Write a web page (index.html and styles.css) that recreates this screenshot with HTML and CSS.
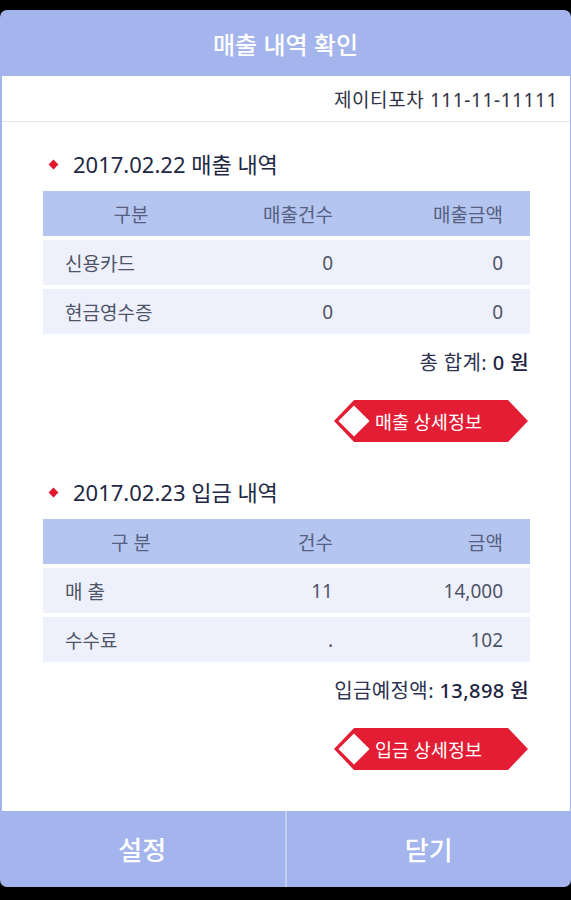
FILE: index.html
```html
<!DOCTYPE html>
<html lang="ko">
<head>
<meta charset="utf-8">
<title>매출 내역 확인</title>
<link rel="stylesheet" href="styles.css">
</head>
<body>
<div class="dialog">
  <header class="dlg-title">매출 내역 확인</header>
  <main class="dlg-body">
    <div class="store">제이티포차 111-11-11111</div>

    <section class="sec sec-first">
      <h2 class="sec-title"><span class="dot"></span>2017.02.22 매출 내역</h2>
      <div class="tbl">
        <div class="row head"><span class="c1">구분</span><span class="c2">매출건수</span><span class="c3">매출금액</span></div>
        <div class="row"><span class="c1">신용카드</span><span class="c2">0</span><span class="c3">0</span></div>
        <div class="row"><span class="c1">현금영수증</span><span class="c2">0</span><span class="c3">0</span></div>
      </div>
      <div class="total">총 합계: <b>0 원</b></div>
      <div class="btn-wrap"><button class="tag-btn">매출 상세정보</button></div>
    </section>

    <section class="sec">
      <h2 class="sec-title"><span class="dot"></span>2017.02.23 입금 내역</h2>
      <div class="tbl">
        <div class="row head"><span class="c1">구 분</span><span class="c2">건수</span><span class="c3">금액</span></div>
        <div class="row"><span class="c1">매 출</span><span class="c2">11</span><span class="c3">14,000</span></div>
        <div class="row"><span class="c1">수수료</span><span class="c2">.</span><span class="c3">102</span></div>
      </div>
      <div class="total">입금예정액: <b>13,898 원</b></div>
      <div class="btn-wrap"><button class="tag-btn">입금 상세정보</button></div>
    </section>
  </main>
  <footer class="dlg-foot">
    <button class="foot-btn">설정</button>
    <button class="foot-btn">닫기</button>
  </footer>
</div>
</body>
</html>
```

FILE: styles.css
```css
* { box-sizing: border-box; }
html, body {
  margin: 0;
  padding: 0;
  background: #000;
}
body {
  font-family: "Noto Sans", "Noto Sans CJK KR", sans-serif;
  padding-top: 10px;
}
.dialog {
  width: 571px;
  height: 877px;
  background: #a4b4ec;
  border-radius: 7px;
  display: flex;
  flex-direction: column;
  overflow: hidden;
}
.dlg-title {
  height: 66px;
  display: flex;
  align-items: center;
  justify-content: center;
  color: #fff;
  font-size: 24px;
  font-weight: 500;
}
.dlg-body {
  flex: 1;
  background: #fff;
  margin: 0 1px 0 2px;
}
.store {
  height: 46px;
  border-bottom: 1px solid #e4e6ee;
  display: flex;
  align-items: center;
  justify-content: flex-end;
  padding-right: 12px;
  font-size: 19px;
  letter-spacing: 0.6px;
  color: #2f3345;
}
.sec {
  padding: 0 40px 0 41px;
}
.sec-first { padding-top: 27px; }
.sec-title {
  margin: 0 0 14px 0;
  height: 28px;
  display: flex;
  align-items: center;
  font-size: 22px;
  font-weight: 400;
  color: #222844;
  padding-left: 7px;
}
.dot {
  width: 7px;
  height: 7px;
  background: #e0182d;
  transform: rotate(45deg);
  margin-right: 16px;
  margin-top: 2px;
}
.tbl {
  display: flex;
  flex-direction: column;
  gap: 4px;
}
.row {
  display: grid;
  grid-template-columns: 176px 142px 1fr;
  height: 45px;
  align-items: center;
  background: #eef1fb;
  font-size: 19px;
  color: #4e5468;
}
.row .c1 { padding-left: 22px; }
.row .c2 { text-align: right; padding-right: 28px; }
.row .c3 { text-align: right; padding-right: 27px; }
.row.head {
  background: #b4c5ef;
  color: #566080;
}
.row.head .c1 { text-align: center; padding-left: 0; }
.total {
  margin-top: 16px;
  height: 26px;
  line-height: 26px;
  text-align: right;
  font-size: 20px;
  letter-spacing: 0.4px;
  color: #2d3350;
  padding-right: 1px;
}
.total b {
  font-weight: 500;
  color: #1d2240;
}
.btn-wrap {
  margin-top: 24px;
  display: flex;
  justify-content: flex-end;
  padding-right: 2px;
}
.sec-first .btn-wrap { margin-bottom: 35px; }
.tag-btn {
  position: relative;
  width: 194px;
  height: 42px;
  border: 0;
  background: #e31d33;
  clip-path: polygon(20px 0, calc(100% - 20px) 0, 100% 50%, calc(100% - 20px) 100%, 20px 100%, 0 50%);
  color: #fff;
  font-family: inherit;
  font-size: 18.5px;
  padding: 0 0 0 41px;
  text-align: left;
  cursor: pointer;
}
.tag-btn::before {
  content: "";
  position: absolute;
  left: 9px;
  top: 10px;
  width: 22px;
  height: 22px;
  background: #fff;
  transform: rotate(45deg);
}
.dlg-foot {
  height: 76px;
  display: flex;
}
.foot-btn {
  flex: 1;
  border: 0;
  background: transparent;
  color: #fff;
  font-family: inherit;
  font-size: 26px;
  font-weight: 500;
  cursor: pointer;
}
.foot-btn + .foot-btn {
  border-left: 2px solid #c5cdf0;
}
```
